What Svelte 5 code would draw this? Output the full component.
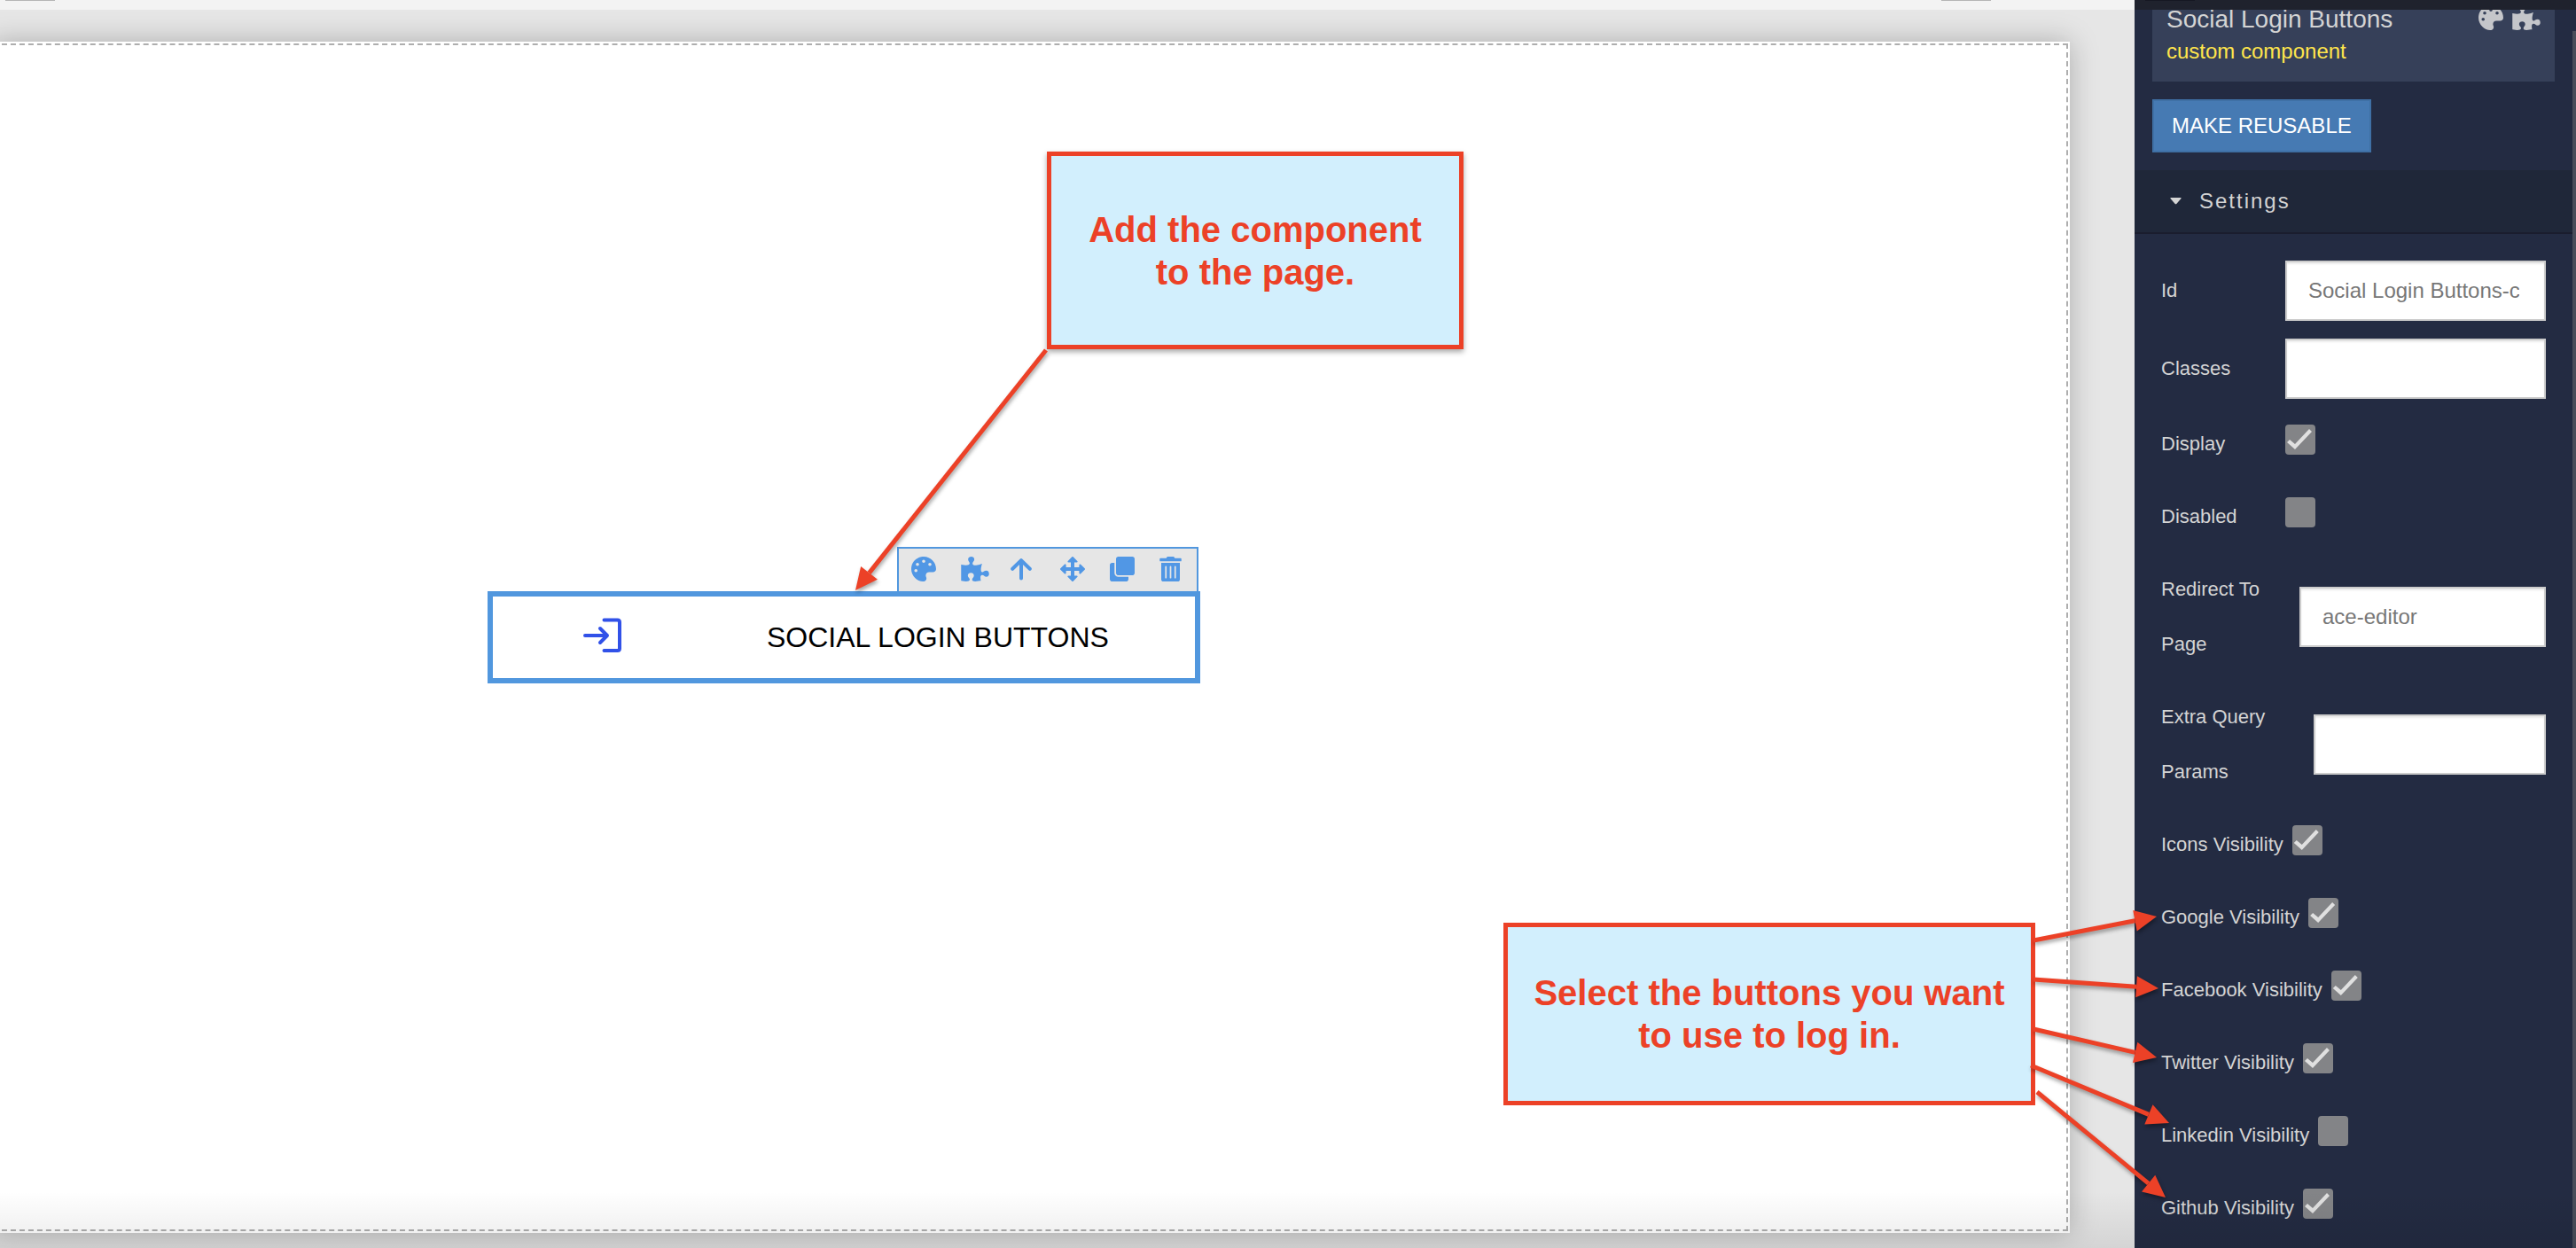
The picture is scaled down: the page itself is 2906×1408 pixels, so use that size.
<script>
  const PALETTE =
    'M204.3 5C104.9 24.4 24.8 104.3 5.2 203.4c-37 187 131.7 326.4 258.8 306.7 41.2-6.4 61.4-54.6 42.5-91.7-23.1-45.4 9.9-98.4 60.9-98.4h79.7c35.8 0 64.8-29.6 64.9-65.3C511.5 97.1 368.1-26.9 204.3 5zM96 320c-17.7 0-32-14.3-32-32s14.3-32 32-32 32 14.3 32 32-14.3 32-32 32zm32-128c-17.7 0-32-14.3-32-32s14.3-32 32-32 32 14.3 32 32-14.3 32-32 32zm128-64c-17.7 0-32-14.3-32-32s14.3-32 32-32 32 14.3 32 32-14.3 32-32 32zm128 64c-17.7 0-32-14.3-32-32s14.3-32 32-32 32 14.3 32 32-14.3 32-32 32z';
  const PUZZLE =
    'M519.442 288.651c-41.519 0-59.5 31.593-82.058 31.593C377.409 320.244 432 144 432 144s-196.288 80-196.288-3.297c0-35.827 36.288-46.25 36.288-85.985C272 19.216 243.885 0 210.539 0c-34.654 0-66.366 18.891-66.366 56.346 0 41.364 31.711 59.277 31.711 81.75C175.885 207.719 0 166.758 0 166.758v333.237s178.635 41.047 178.635-28.662c0-22.473-40-40.107-40-81.471 0-37.456 29.25-56.346 63.577-56.346 33.673 0 61.788 19.216 61.788 54.717 0 39.735-36.288 50.158-36.288 85.985 0 60.803 129.675 25.73 181.23 25.73 0 0-34.725-120.101 25.827-120.101 35.962 0 46.423 36.152 86.308 36.152C556.712 416 576 387.99 576 354.443c0-34.199-18.962-65.792-56.558-65.792z';
  const CLONE =
    'M464 0c26.51 0 48 21.49 48 48v288c0 26.51-21.49 48-48 48H176c-26.51 0-48-21.49-48-48V48c0-26.51 21.49-48 48-48h288M176 416c-44.112 0-80-35.888-80-80V128H48c-26.51 0-48 21.49-48 48v288c0 26.51 21.49 48 48 48h288c26.51 0 48-21.49 48-48v-48H176z';
  const TRASH =
    'M32 464a48 48 0 0 0 48 48h288a48 48 0 0 0 48-48V128H32zm272-256a16 16 0 0 1 32 0v224a16 16 0 0 1-32 0zm-96 0a16 16 0 0 1 32 0v224a16 16 0 0 1-32 0zm-96 0a16 16 0 0 1 32 0v224a16 16 0 0 1-32 0zM432 32H312l-9.4-18.7A24 24 0 0 0 281.1 0H166.8a23.72 23.72 0 0 0-21.4 13.3L136 32H16A16 16 0 0 0 0 48v32a16 16 0 0 0 16 16h416a16 16 0 0 0 16-16V48a16 16 0 0 0-16-16z';

  // Each connector runs from its callout to the tip of its arrowhead.
  const connectors = [
    [1180, 395, 965, 666],
    [2294, 1061, 2433, 1034],
    [2294, 1105, 2435, 1115],
    [2294, 1161, 2433, 1193],
    [2291, 1202, 2447, 1267],
    [2298, 1232, 2443, 1351],
  ].map(([x1, y1, x2, y2]) => {
    const length = Math.hypot(x2 - x1, y2 - y1);
    const ux = (x2 - x1) / length;
    const uy = (y2 - y1) / length;
    const bx = x2 - ux * 25;
    const by = y2 - uy * 25;
    return {
      line: { x1, y1, x2: bx, y2: by },
      head: `${x2},${y2} ${bx - uy * 12},${by + ux * 12} ${bx + uy * 12},${by - ux * 12}`,
    };
  });

  let fields = $state([
    { id: 'id', label: 'Id', kind: 'text', size: 'short', value: 'Social Login Buttons-component' },
    { id: 'classes', label: 'Classes', kind: 'text', size: 'short', value: '' },
    { id: 'display', label: 'Display', kind: 'check', size: 'short', value: true },
    { id: 'disabled', label: 'Disabled', kind: 'check', size: 'short', value: false },
    { id: 'redirect', label: 'Redirect To Page', kind: 'text', size: 'medium', value: 'ace-editor' },
    { id: 'params', label: 'Extra Query Params', kind: 'text', size: 'long', value: '' },
    { id: 'icons', label: 'Icons Visibility', kind: 'check', size: 'auto', value: true },
    { id: 'google', label: 'Google Visibility', kind: 'check', size: 'auto', value: true },
    { id: 'facebook', label: 'Facebook Visibility', kind: 'check', size: 'auto', value: true },
    { id: 'twitter', label: 'Twitter Visibility', kind: 'check', size: 'auto', value: true },
    { id: 'linkedin', label: 'Linkedin Visibility', kind: 'check', size: 'auto', value: false },
    { id: 'github', label: 'Github Visibility', kind: 'check', size: 'auto', value: true },
  ]);
</script>

<div class="app">
  <main class="workspace">
    <div class="topbar"><i class="tab"></i><i class="tab"></i></div>
    <div class="stage">
      <div class="sheet">
        <div class="guide">
          <div class="block">
            <div class="tools">
              <button aria-label="Style"><svg width="28" height="28" viewBox="0 0 512 512"><path d={PALETTE} /></svg></button>
              <button aria-label="Component"><svg width="32" height="28" viewBox="0 0 576 512"><path d={PUZZLE} /></svg></button>
              <button aria-label="Select parent">
                <svg class="stroked" width="24" height="28" viewBox="0 0 24 28"><path d="M12 4.5V24.5M2.2 13.8L12 4.2L21.8 13.8" /></svg>
              </button>
              <button aria-label="Move">
                <svg width="28" height="28" viewBox="0 0 28 28">
                  <path class="bar" d="M14 4V24M4 14H24" />
                  <path class="tip" d="M14 1L18.6 5.6H9.4ZM14 27L9.4 22.4H18.6ZM1 14L5.6 9.4V18.6ZM27 14L22.4 18.6V9.4Z" />
                </svg>
              </button>
              <button aria-label="Duplicate"><svg width="28" height="28" viewBox="0 0 512 512"><path d={CLONE} /></svg></button>
              <button aria-label="Delete"><svg width="25" height="28" viewBox="0 0 448 512"><path d={TRASH} /></svg></button>
            </div>
            <div class="social">
              <svg class="login" width="43" height="40" viewBox="0 0 43 40">
                <path d="M2 20H27M19 12L27 20L19 28M23.5 2.5H38.5Q41 2.5 41 5V34.5Q41 37 38.5 37H23.5" />
              </svg>
              <span>SOCIAL LOGIN BUTTONS</span>
            </div>
          </div>
        </div>
      </div>
    </div>
  </main>

  <aside class="panel">
    <div class="panel-bar"><i class="tab"></i></div>
    <div class="panel-body">
      <div class="intro">
        <div class="card">
          <div>
            <h1>Social Login Buttons</h1>
            <p>custom component</p>
          </div>
          <div class="card-icons">
            <svg width="28" height="28" viewBox="0 0 512 512"><path d={PALETTE} /></svg>
            <svg width="32" height="28" viewBox="0 0 576 512"><path d={PUZZLE} /></svg>
          </div>
        </div>
        <button class="reuse">MAKE REUSABLE</button>
      </div>
      <button class="section" aria-expanded="true">
        <svg width="13" height="8" viewBox="0 0 13 8"><path d="M1 0H12Q13 0 12.5 1L7.3 7Q6.5 7.7 5.7 7L.5 1Q0 0 1 0Z" /></svg>
        Settings
      </button>
      <form class="fields">
        {#each fields as field (field.id)}
          <div class="row {field.kind}">
            <label class={field.size} for={field.id}>{field.label}</label>
            {#if field.kind === 'text'}
              <input id={field.id} type="text" bind:value={field.value} />
            {:else}
              <input id={field.id} type="checkbox" bind:checked={field.value} />
            {/if}
          </div>
        {/each}
      </form>
    </div>
    <div class="scroll"></div>
  </aside>

  <div class="fade"></div>

  <div class="callout add">Add the component<br />to the page.</div>
  <div class="callout select">Select the buttons you want<br />to use to log in.</div>
  <svg class="connectors">
    {#each connectors as { line, head }}
      <g>
        <line {...line} />
        <polygon points={head} />
      </g>
    {/each}
  </svg>
</div>

<style>
  :global(body) {
    margin: 0;
  }
  .app,
  .app * {
    box-sizing: border-box;
  }
  .app {
    position: relative;
    display: flex;
    min-height: 100vh;
    overflow: hidden;
    font-family: 'Liberation Sans', Arial, sans-serif;
  }
  button,
  input {
    font-family: inherit;
  }
  svg {
    display: block;
    flex: none;
    fill: currentColor;
  }

  .workspace {
    flex: 1;
    min-width: 0;
    display: flex;
    flex-direction: column;
    background: #e6e6e6;
    overflow: hidden;
  }
  .topbar {
    display: flex;
    justify-content: space-between;
    height: 11px;
    padding: 0 162px 0 6px;
    background: #f3f3f3;
  }
  .tab {
    width: 56px;
    height: 1px;
    background: #b5b5b5;
  }
  .stage {
    flex: 1;
    display: flex;
    padding: 36px 73px 17px 0;
    overflow: hidden;
  }
  .sheet {
    flex: 1;
    display: flex;
    margin-left: -10px;
    padding: 2px;
    background: #fff;
    box-shadow: 0 0 30px rgba(0, 0, 0, 0.25);
  }
  .guide {
    flex: 1;
    padding: 566px 0 0 556px;
    border: 2px dashed #aeaeae;
  }
  .block {
    display: flex;
    flex-direction: column;
    width: 804px;
  }
  .tools {
    display: flex;
    align-self: flex-end;
    height: 50px;
    margin-right: 2px;
    padding-bottom: 2px;
    border: 2px solid #5197de;
    border-bottom: 0;
    background: #e6e6e6;
  }
  .tools button {
    display: flex;
    align-items: center;
    width: 56px;
    padding: 0 0 0 14px;
    border: 0;
    background: none;
    color: #5197e5;
  }
  .stroked {
    fill: none;
    stroke: currentColor;
    stroke-width: 4;
    stroke-linecap: round;
    stroke-linejoin: round;
  }
  .bar {
    stroke: currentColor;
    stroke-width: 4;
  }
  .tip {
    stroke: currentColor;
    stroke-width: 2;
    stroke-linejoin: round;
  }
  .social {
    display: flex;
    align-items: center;
    height: 104px;
    padding-left: 102px;
    gap: 164px;
    border: 6px solid #5197de;
    background: #fff;
    color: #000;
    font-size: 32px;
    line-height: 40px;
  }
  .login {
    margin-bottom: 4px;
    fill: none;
    stroke: #3151e8;
    stroke-width: 4;
    stroke-linecap: round;
    stroke-linejoin: round;
  }

  .panel {
    position: relative;
    display: flex;
    width: 498px;
    flex: none;
    background: #232b42;
    color: #d4d4d4;
  }
  .panel-bar {
    position: absolute;
    inset: 0 0 auto 0;
    height: 11px;
    padding-left: 12px;
    background: #1f222d;
  }
  .panel-bar .tab {
    display: block;
    background: #151722;
  }
  .panel-body {
    flex: 1;
    min-width: 0;
  }
  .scroll {
    width: 4px;
    margin-top: 35px;
    background: #494d5a;
  }
  .intro {
    padding: 0 20px 20px;
  }
  .card {
    display: flex;
    justify-content: space-between;
    padding: 6px 16px 18px;
    background: #364059;
  }
  h1 {
    margin: 0 0 4px;
    font-size: 28px;
    line-height: 32px;
    font-weight: 400;
  }
  .card p {
    margin: 0;
    color: #ffe54c;
    font-size: 24px;
    line-height: 32px;
  }
  .card-icons {
    display: flex;
    gap: 10px;
    color: #c5c6ca;
  }
  .reuse {
    display: block;
    height: 60px;
    margin-top: 20px;
    padding: 0 20px;
    border: 2px solid #3f70a5;
    background: #467ab3;
    color: #fff;
    font-size: 24px;
  }
  .section {
    display: flex;
    align-items: center;
    gap: 20px;
    width: 100%;
    height: 72px;
    padding: 0 40px;
    border: 0;
    border-bottom: 2px solid #1a1d2e;
    background: #1f2739;
    color: #d4d4d4;
    font-size: 24px;
    letter-spacing: 2px;
  }
  .fields {
    display: flex;
    flex-direction: column;
    gap: 20px;
    padding: 30px 30px 14px;
  }
  .row {
    display: flex;
    align-items: center;
    gap: 10px;
  }
  .row.check {
    align-items: flex-start;
  }
  label {
    flex: none;
    font-size: 22px;
    line-height: 62px;
  }
  .short {
    width: 130px;
  }
  .medium {
    width: 146px;
  }
  .long {
    width: 162px;
  }
  input[type='text'] {
    flex: 1;
    min-width: 0;
    height: 68px;
    padding: 0 28px 0 24px;
    border: 2px solid #ccc;
    border-radius: 0;
    background: #fff;
    box-shadow: inset 0 2px 2px rgba(0, 0, 0, 0.08);
    color: #777;
    font-size: 24px;
  }
  input[type='checkbox'] {
    appearance: none;
    width: 34px;
    height: 34px;
    margin: 9px 0 0;
    border-radius: 4px;
    background: #838487;
  }
  input[type='checkbox']:checked::before {
    content: '';
    display: block;
    width: 34px;
    height: 34px;
    background: #e0e0e0;
    clip-path: polygon(2px 20px, 5px 17px, 11px 22px, 27px 5px, 30px 8px, 11px 28px);
  }

  .fade {
    position: absolute;
    inset: auto 0 0 0;
    height: 64px;
    background: linear-gradient(rgba(0, 0, 0, 0), rgba(0, 0, 0, 0.08));
    pointer-events: none;
  }
  .callout {
    position: absolute;
    display: flex;
    align-items: center;
    justify-content: center;
    border: 5px solid #ec4127;
    background: #d2effd;
    box-shadow: 0 3px 6px rgba(0, 0, 0, 0.35);
    color: #ec4127;
    font-size: 40px;
    line-height: 48px;
    font-weight: 700;
    text-align: center;
  }
  .add {
    left: 1181px;
    top: 171px;
    width: 470px;
    height: 223px;
  }
  .select {
    left: 1696px;
    top: 1041px;
    width: 600px;
    height: 206px;
    box-shadow: none;
  }
  .connectors {
    position: absolute;
    inset: 0;
    width: 100%;
    height: 100%;
    fill: #ec4127;
    stroke: #ec4127;
    filter: drop-shadow(1px 3px 2px rgba(0, 0, 0, 0.35));
    pointer-events: none;
  }
  .connectors line {
    stroke-width: 5;
  }
  .connectors polygon {
    stroke: none;
  }
</style>
